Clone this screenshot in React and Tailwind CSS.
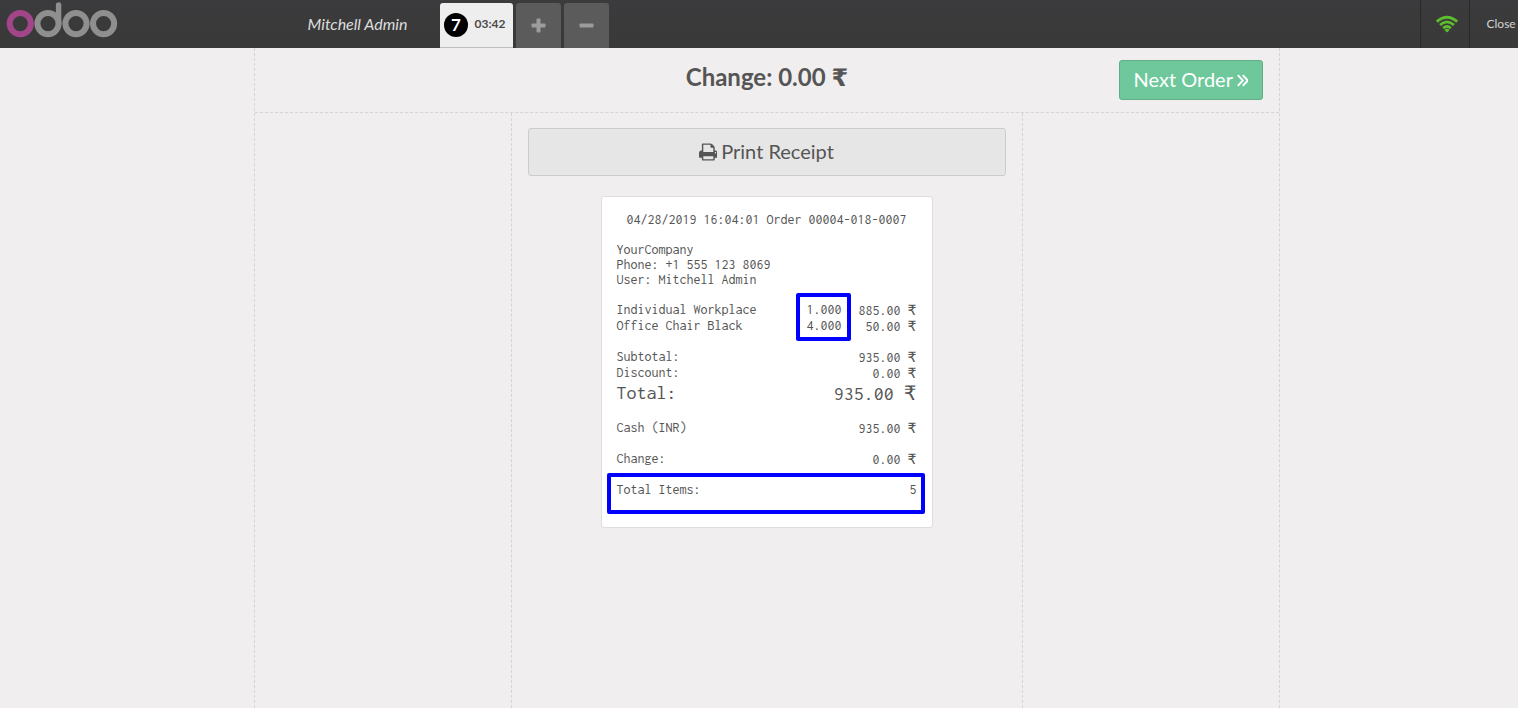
import React from 'react';

function Logo() {
  return (
    <svg className="block h-[48px] w-[124px]" viewBox="0 0 124 48" fill="none" strokeWidth="6" strokeLinecap="round">
      <circle cx="48" cy="23.6" r="10.6" stroke="#8f8f8f" />
      <path d="M58.6 23.6V5" stroke="#8f8f8f" strokeWidth="5.4" />
      <circle cx="76" cy="23.6" r="10.6" stroke="#8f8f8f" />
      <circle cx="103.6" cy="23.6" r="10.6" stroke="#8f8f8f" />
      <circle cx="20.3" cy="23.6" r="10.6" stroke="#a24689" />
    </svg>
  );
}

function WifiIcon() {
  return (
    <svg className="block h-[18px] w-[24px]" viewBox="0 0 24 18" fill="none" stroke="#5ebd2e" strokeWidth="2.8">
      <path d="M1.8 6.6Q12 -2.2 22.2 6.6" />
      <path d="M5 10Q12 3.8 19 10" />
      <path d="M8.2 13.2Q12 9.8 15.8 13.2" />
      <path d="M12 17.4L9.4 14.9Q12 12.8 14.6 14.9Z" fill="#5ebd2e" stroke="none" />
    </svg>
  );
}

function PrintIcon() {
  return (
    <svg className="block h-[20px] w-[18.6px]" viewBox="0 0 1664 1792" fill="currentColor">
      <path d="M384 1536h896v-256h-896v256zm0-640h896v-384h-160q-40 0-68-28t-28-68v-160h-640v640zm1152 64q0-26-19-45t-45-19-45 19-19 45 19 45 45 19 45-19 19-45zm128 0v416q0 13-9.5 22.5t-22.5 9.5h-224v160q0 40-28 68t-68 28h-960q-40 0-68-28t-28-68v-160h-224q-13 0-22.5-9.5t-9.5-22.5v-416q0-79 56.5-135.5t135.5-56.5h64v-544q0-40 28-68t68-28h672q40 0 88 20t76 48l152 152q28 28 48 76t20 88v256h64q79 0 135.5 56.5t56.5 135.5z" />
    </svg>
  );
}

function Header() {
  return (
    <header className="flex h-[48px] bg-linear-to-b from-[#3b3b3d] to-[#393939] text-[#d3d3d3]">
      <div className="w-[278px]">
        <Logo />
      </div>
      <div className="flex w-[162px] items-center pl-[29.5px] text-[16px] italic text-[#dddddd]">Mitchell Admin</div>
      <div className="flex gap-[3px] pt-[3px]">
        <div className="flex h-[45px] w-[73px] items-center rounded-t-[3px] border-b border-[#bdbdbd] bg-[#eeeeee] pl-[4px] text-[#4a4a4a]">
          <span className="flex size-[24px] items-center justify-center rounded-full bg-black pb-[2px] text-[17px] leading-none font-bold text-white">7</span>
          <span className="ml-[6.5px] pb-[2px] text-[12px] leading-none font-bold">03:42</span>
        </div>
        <div className="flex h-[45px] w-[45px] items-center justify-center rounded-t-[3px] bg-[#5b5b5b]">
          <svg className="size-[15px]" viewBox="0 0 15 15" fill="#9c9c9c">
            <rect x="0.5" y="5.5" width="14" height="4" rx="1" />
            <rect x="5.5" y="0.5" width="4" height="14" rx="1" />
          </svg>
        </div>
        <div className="flex h-[45px] w-[45px] items-center justify-center rounded-t-[3px] bg-[#5b5b5b]">
          <svg className="size-[15px]" viewBox="0 0 15 15" fill="#9c9c9c">
            <rect x="0.5" y="5.5" width="14" height="4" rx="1" />
          </svg>
        </div>
      </div>
      <div className="ml-auto flex w-[98px]">
        <div className="flex w-[49px] items-center justify-center border-l border-[#292929] pl-[4px]">
          <WifiIcon />
        </div>
        <div className="flex w-[49px] items-center border-l border-[#292929] pl-[16.5px] text-[12px]">Close</div>
      </div>
    </header>
  );
}

function Amount({ value, large }) {
  return (
    <span className="relative top-px whitespace-pre">
      {value + ' '}
      <span className={large ? "font-['DejaVu_Sans'] text-[20px] leading-none" : "font-['DejaVu_Sans'] text-[14px] leading-none"}>₹</span>
    </span>
  );
}

function Row({ label, value, large }) {
  return (
    <div className={large ? 'flex h-[24px] justify-between text-[20px] leading-[24px]' : 'flex h-[16px] justify-between leading-[16px]'}>
      <span>{label}</span>
      <Amount value={value} large={large} />
    </div>
  );
}

function Receipt() {
  return (
    <div className="relative mx-auto mt-[20px] h-[332px] w-[332px] rounded-[3px] border border-[#dddddd] bg-white pt-[15px] pr-[15.6px] pl-[14.5px] font-['Inconsolata','DejaVu_Sans_Mono',monospace] text-[14px] leading-[15px] text-[#555555]">
      <div className="text-center whitespace-nowrap">04/28/2019 16:04:01 Order 00004-018-0007</div>
      <div className="mt-[15px]">
        <div>YourCompany</div>
        <div>Phone: +1 555 123 8069</div>
        <div>User: Mitchell Admin</div>
      </div>
      <div className="mt-[15px] leading-[16px]">
        <div className="flex h-[16px]">
          <span className="w-[190px]">Individual Workplace</span>
          <span>1.000</span>
          <span className="ml-auto"><Amount value="885.00" /></span>
        </div>
        <div className="flex h-[16px]">
          <span className="w-[190px]">Office Chair Black</span>
          <span>4.000</span>
          <span className="ml-auto"><Amount value="50.00" /></span>
        </div>
      </div>
      <div className="mt-[15px]">
        <Row label="Subtotal:" value="935.00" />
        <Row label="Discount:" value="0.00" />
        <Row label="Total:" value="935.00" large />
      </div>
      <div className="mt-[15px]">
        <Row label="Cash (INR)" value="935.00" />
      </div>
      <div className="mt-[15px]">
        <Row label="Change:" value="0.00" />
      </div>
      <div className="mt-[15px] flex justify-between leading-[16px]">
        <span>Total Items:</span>
        <span>5</span>
      </div>
      <div className="absolute top-[96px] left-[194px] h-[48px] w-[55px] rounded-[2px] border-4 border-[#0000ff]" />
      <div className="absolute top-[276px] left-[5px] h-[41px] w-[318px] rounded-[2px] border-4 border-[#0000ff]" />
    </div>
  );
}

export default function App() {
  return (
    <div className="h-[708px] w-[1518px] overflow-hidden bg-[#f0eeee] font-['Lato',sans-serif] text-[#555555]">
      <Header />
      <main className="ml-[254px] flex h-[660px] w-[1026px] flex-col border-x border-dashed border-[#d5d3d3]">
        <div className="grid h-[65px] grid-cols-[1fr_auto_1fr] border-b border-dashed border-[#d5d3d3]">
          <span />
          <h1 className="pt-[11px] text-[24px] leading-[36px] font-bold whitespace-nowrap">
            Change: 0.00 <span className="font-['DejaVu_Sans'] leading-none">₹</span>
          </h1>
          <button className="mt-[12px] mr-[16px] flex h-[40px] w-[144px] items-center justify-center gap-[4px] justify-self-end rounded-[3px] border border-[#5fae86] bg-[#6ec89b] pb-[2px] text-[20px] whitespace-nowrap text-white">
            Next Order
            <svg className="mt-[2px] h-[13px] w-[11.5px]" viewBox="0 0 11 12" fill="none" stroke="currentColor" strokeWidth="1.8">
              <path d="M0.8 0.8L5.6 6L0.8 11.2M5.5 0.8L10.3 6L5.5 11.2" />
            </svg>
          </button>
        </div>
        <div className="grid flex-1 grid-cols-[256px_512px_256px]">
          <div />
          <section className="border-x border-dashed border-[#d5d3d3] px-[16px] pt-[15px]">
            <button className="flex h-[48px] w-full items-center justify-center gap-[4px] rounded-[3px] border border-[#cbcbcb] bg-[#e6e6e6] pr-[1.5px] pb-[2px] text-[20px]">
              <span className="pt-px"><PrintIcon /></span>
              Print Receipt
            </button>
            <Receipt />
          </section>
          <div />
        </div>
      </main>
    </div>
  );
}
